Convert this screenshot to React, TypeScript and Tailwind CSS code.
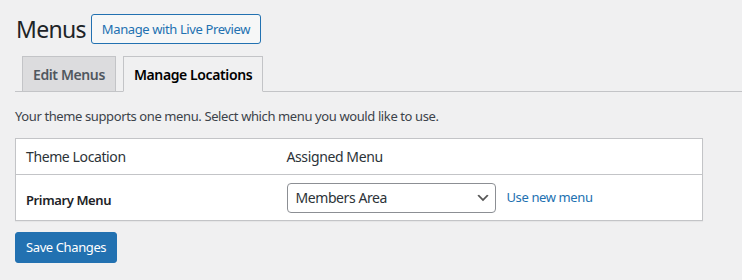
import { useState } from "react";

const font = { fontFamily: '"Noto Sans", "Open Sans", sans-serif' };

function Chevron() {
  return (
    <svg width="16" height="16" viewBox="0 0 20 20" className="pointer-events-none absolute right-[5px] top-1/2 -translate-y-1/2">
      <path d="M5 6l5 5 5-5 2 1-7 7-7-7 2-1z" fill="#555" />
    </svg>
  );
}

export default function App() {
  const [tab, setTab] = useState("locations");
  const [menu, setMenu] = useState("members");

  return (
    <div className="min-h-screen bg-[#f0f0f1] pl-[15px] pt-[14px] text-[13px] tracking-[-0.03em] text-[#3c434a]" style={font}>
      <div className="flex items-center gap-[5px]">
        <h1 className="pl-px text-[23px] font-normal leading-[30px] tracking-[-0.03em] text-[#1d2327]">Menus</h1>
        <button className="h-[30px] rounded-[3px] border border-[#2271b1] bg-[#f6f7f7] px-[10px] text-[13px] leading-[28px] text-[#2271b1]">
          Manage with Live Preview
        </button>
      </div>

      <nav className="mt-[12px] flex items-end gap-[7px] border-b border-[#c3c4c7] pl-[7px]">
        <button
          onClick={() => setTab("edit")}
          className={`-mb-px h-[36px] border border-[#c3c4c7] px-[10px] text-[14px] font-semibold ${
            tab === "edit" ? "border-b-[#f0f0f1] bg-[#f0f0f1] text-black" : "bg-[#dcdcde] text-[#50575e]"
          }`}
        >
          Edit Menus
        </button>
        <button
          onClick={() => setTab("locations")}
          className={`-mb-px h-[36px] border border-[#c3c4c7] px-[10px] text-[14px] font-semibold ${
            tab === "locations" ? "border-b-[#f0f0f1] bg-[#f0f0f1] text-black" : "bg-[#dcdcde] text-[#50575e]"
          }`}
        >
          Manage Locations
        </button>
      </nav>

      <p className="mt-[15px] leading-[19px]">Your theme supports one menu. Select which menu you would like to use.</p>

      <table className="mt-[12px] w-[688px] border-collapse border border-[#c3c4c7] bg-white shadow-[0_1px_1px_rgba(0,0,0,0.04)]">
        <thead>
          <tr className="border-b border-[#c3c4c7]">
            <th className="h-[36px] w-[261px] px-[10px] text-left text-[14px] font-normal text-[#2c3338]">Theme Location</th>
            <th className="h-[36px] px-[10px] text-left text-[14px] font-normal text-[#2c3338]">Assigned Menu</th>
          </tr>
        </thead>
        <tbody>
          <tr>
            <td className="h-[46px] px-[10px] pt-[6px] text-[13px] font-semibold text-[#1d2327]">Primary Menu</td>
            <td className="h-[46px] px-[10px]">
              <div className="flex items-center gap-[11px]">
                <div className="relative">
                  <select
                    value={menu}
                    onChange={(e) => setMenu(e.target.value)}
                    className="h-[30px] w-[209px] appearance-none rounded-[4px] border border-[#8c8f94] bg-white pl-[8px] pr-[24px] text-[14px] tracking-[-0.03em] text-[#2c3338]"
                    style={font}
                  >
                    <option value="members">Members Area</option>
                    <option value="main">Main Menu</option>
                  </select>
                  <Chevron />
                </div>
                <a href="#" className="text-[13px] text-[#2271b1]">Use new menu</a>
              </div>
            </td>
          </tr>
        </tbody>
      </table>

      <button className="mt-[11px] h-[31px] rounded-[3px] border border-[#2271b1] bg-[#2271b1] px-[10px] text-[13px] text-white">
        Save Changes
      </button>
    </div>
  );
}
